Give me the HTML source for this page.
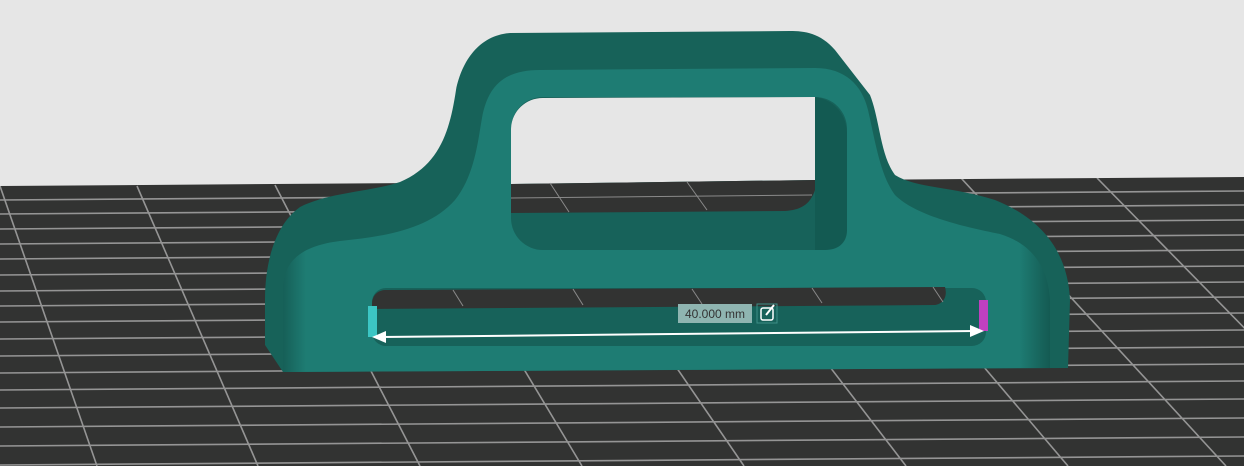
<!DOCTYPE html>
<html><head><style>
html,body{margin:0;padding:0;width:1244px;height:466px;overflow:hidden;background:#e6e6e6}
svg{display:block}
</style></head><body>
<svg width="1244" height="466" viewBox="0 0 1244 466" xmlns="http://www.w3.org/2000/svg" font-family="Liberation Sans, sans-serif">
<defs>
<clipPath id="floor"><polygon points="0,186 1244,177 1244,466 0,466"/></clipPath>
<linearGradient id="lg" x1="0" x2="1" y1="0" y2="0">
<stop offset="0" stop-color="#165f57"/><stop offset="0.03" stop-color="#1e7c73"/><stop offset="0.96" stop-color="#1e7c73"/><stop offset="1" stop-color="#145a52"/>
</linearGradient>
</defs>
<polygon points="0,186 1244,177 1244,466 0,466" fill="#323332"/>
<g clip-path="url(#floor)" stroke="#959595" stroke-width="1.6">
<line x1="0" y1="200" x2="1244" y2="191"/>
<line x1="0" y1="214" x2="1244" y2="205"/>
<line x1="0" y1="229" x2="1244" y2="220"/>
<line x1="0" y1="244" x2="1244" y2="235"/>
<line x1="0" y1="259" x2="1244" y2="250"/>
<line x1="0" y1="275" x2="1244" y2="266"/>
<line x1="0" y1="291" x2="1244" y2="282"/>
<line x1="0" y1="306" x2="1244" y2="297"/>
<line x1="0" y1="322" x2="1244" y2="313"/>
<line x1="0" y1="339" x2="1244" y2="330"/>
<line x1="0" y1="356" x2="1244" y2="347"/>
<line x1="0" y1="373" x2="1244" y2="364"/>
<line x1="0" y1="390" x2="1244" y2="381"/>
<line x1="0" y1="408" x2="1244" y2="399"/>
<line x1="0" y1="427" x2="1244" y2="418"/>
<line x1="0" y1="446" x2="1244" y2="437"/>
<line x1="0" y1="465" x2="1244" y2="456"/>
<line x1="0" y1="186" x2="97" y2="466"/>
<line x1="137" y1="186" x2="258" y2="466"/>
<line x1="275" y1="185" x2="420" y2="466"/>
<line x1="413" y1="184" x2="582" y2="466"/>
<line x1="550" y1="183" x2="744" y2="466"/>
<line x1="688" y1="182" x2="906" y2="466"/>
<line x1="825" y1="180" x2="1068" y2="466"/>
<line x1="961" y1="178" x2="1226" y2="466"/>
<line x1="1097" y1="178" x2="1380" y2="466"/>
</g>
<!-- back/top body (dark) -->
<path d="M265,300 L265,345 L283,372 L1068,368 L1070,300 C1068,255 1045,220 995,200 C955,187 915,188 895,175 C880,155 880,120 870,95 L835,50 C820,33 805,31 790,31 L510,33 C480,35 462,60 456,90 C450,130 440,165 400,182 C370,192 330,192 300,207 C275,225 265,262 265,300 Z" fill="#176259"/>
<!-- front face -->
<path d="M283,372 L283,290 C283,262 300,246 340,241 C390,236 430,228 455,200 C475,175 478,140 482,118 C488,85 505,70 540,70 L815,68 C845,68 862,85 868,110 C875,140 880,175 895,195 C915,215 960,226 1000,234 C1035,245 1048,270 1050,300 L1050,368 Z" fill="url(#lg)"/>
<!-- handle hole -->
<rect x="511" y="97" width="336" height="153" rx="32" fill="#17625a"/>
<path d="M543,98 L815,97 L815,180 L511,184 L511,130 C511,112 525,98 543,98 Z" fill="#e6e6e6"/>
<path d="M511,184 L815,180 L815,190 C810,205 800,210 785,211 L511,213 Z" fill="#323332"/>
<line x1="511" y1="198" x2="812" y2="195" stroke="#8a8a8a" stroke-width="1"/>
<line x1="550" y1="183" x2="569" y2="212" stroke="#8a8a8a" stroke-width="1"/>
<line x1="687" y1="182" x2="707" y2="210" stroke="#8a8a8a" stroke-width="1"/>
<path d="M815,97 C835,100 847,115 847,135 L847,230 C847,243 838,250 825,250 L815,250 Z" fill="#135a52"/>
<!-- slot -->
<rect x="372" y="288" width="614" height="58" rx="14" fill="#17625a"/>
<path d="M386,290 L945,287 C948,298 942,304 935,305 L372,309 L372,304 C372,295 378,290 386,290 Z" fill="#323332"/>
<line x1="453" y1="290" x2="463" y2="306" stroke="#8a8a8a" stroke-width="1"/>
<line x1="573" y1="289" x2="583" y2="305" stroke="#8a8a8a" stroke-width="1"/>
<line x1="692" y1="289" x2="702" y2="304" stroke="#8a8a8a" stroke-width="1"/>
<line x1="812" y1="288" x2="822" y2="303" stroke="#8a8a8a" stroke-width="1"/>
<line x1="933" y1="287" x2="943" y2="302" stroke="#8a8a8a" stroke-width="1"/>
<!-- markers -->
<rect x="368" y="306" width="9" height="31" fill="#3cc6c4"/>
<rect x="979" y="300" width="9" height="31" fill="#c040c0"/>
<!-- arrow -->
<line x1="380" y1="337" x2="975" y2="331" stroke="#fff" stroke-width="2"/>
<polygon points="372,337 386,331 386,343" fill="#fff"/>
<polygon points="984,331 970,325 970,337" fill="#fff"/>
<!-- label -->
<rect x="678" y="304" width="74" height="19" fill="#8fb5b1"/>
<text x="715" y="318" font-size="12" fill="#333" text-anchor="middle">40.000 mm</text>
<rect x="757" y="304" width="20" height="19" fill="none" stroke="#3c8f87" stroke-width="1"/>
<rect x="761" y="308" width="12" height="12" rx="2" fill="none" stroke="#fff" stroke-width="1.5"/>
<line x1="766" y1="315" x2="774" y2="305" stroke="#fff" stroke-width="2"/>
</svg>
</body></html>
